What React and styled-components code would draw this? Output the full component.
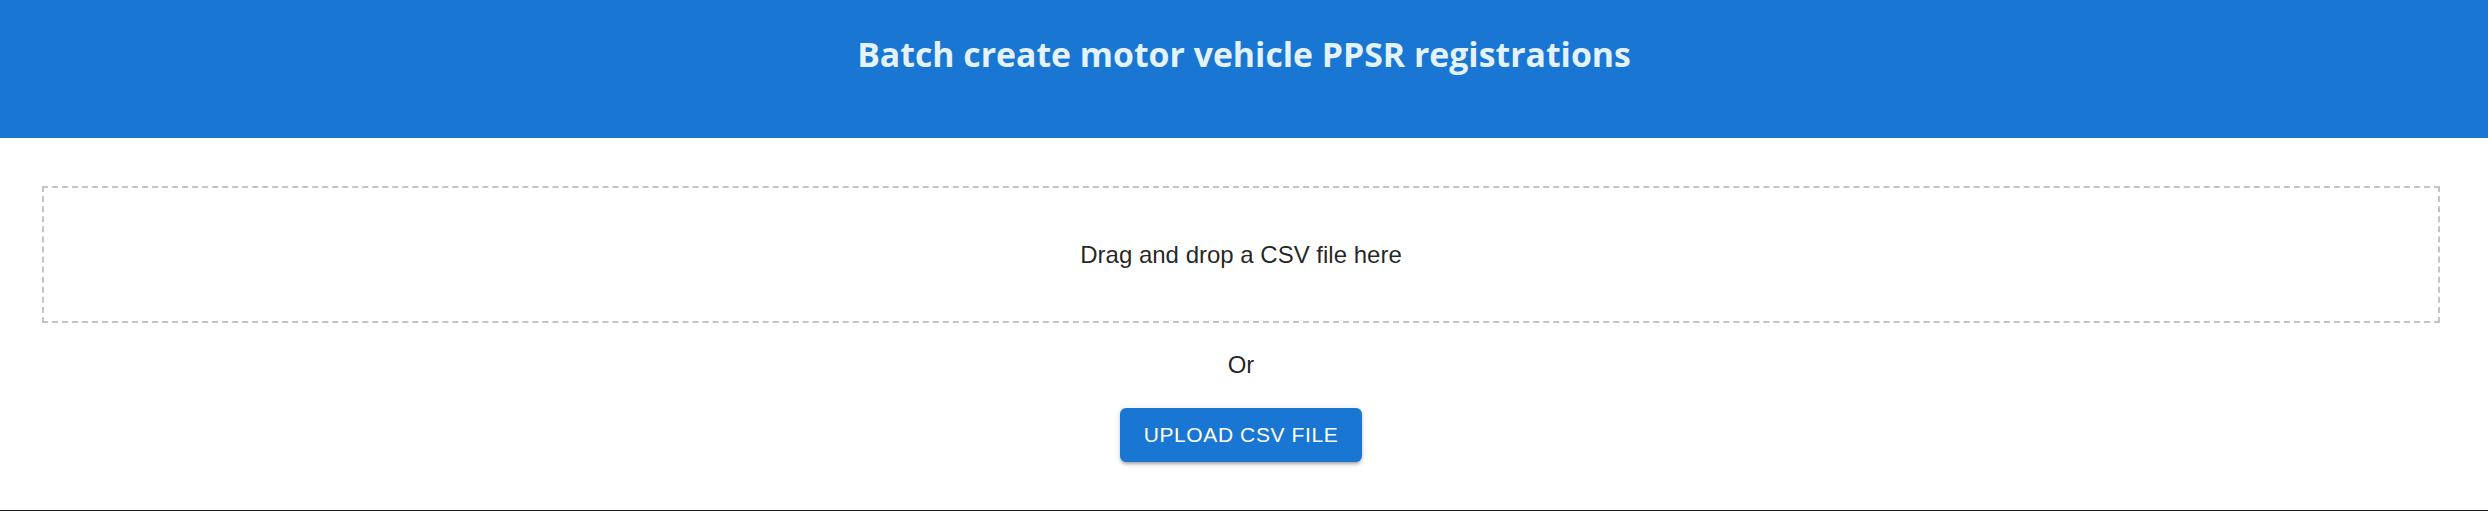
import React from 'react';
import styled, { createGlobalStyle } from 'styled-components';

const GlobalStyle = createGlobalStyle`
  html, body {
    margin: 0;
    padding: 0;
    background: #ffffff;
  }
  * {
    box-sizing: border-box;
  }
`;

const Page = styled.div`
  min-height: 511px;
  display: flex;
  flex-direction: column;
  border-bottom: 1px solid #1c1c1c;
  font-family: "Liberation Sans", Arial, sans-serif;
  color: rgba(0, 0, 0, 0.87);
`;

const Header = styled.header`
  height: 138px;
  padding-top: 34px;
  background: #1976d2;
  display: flex;
  justify-content: center;
  align-items: flex-start;
`;

const Title = styled.h1`
  margin: 0;
  font-family: "Open Sans", "Noto Sans", sans-serif;
  font-weight: 700;
  font-size: 33.8px;
  line-height: 40px;
  color: #e3f2fd;
`;

const Main = styled.main`
  padding: 48px 48px 0 42px;
  display: flex;
  flex-direction: column;
  align-items: center;
`;

const DropZone = styled.div`
  width: 100%;
  height: 137px;
  border: 2px dashed #c4c4c4;
  display: flex;
  align-items: center;
  justify-content: center;
`;

const Text = styled.p`
  margin: ${(p) => p.$top || 0}px 0 0;
  font-size: 24px;
  line-height: 36px;
`;

const UploadButton = styled.button`
  margin-top: 25px;
  padding: 9px 24px;
  border: none;
  border-radius: 6px;
  background: #1976d2;
  color: #ffffff;
  font-family: "Liberation Sans", Arial, sans-serif;
  font-size: 21px;
  line-height: 36px;
  letter-spacing: 0.6px;
  text-transform: uppercase;
  cursor: pointer;
  box-shadow: 0 4px 2px -3px rgba(0, 0, 0, 0.2),
    0 3px 3px 0 rgba(0, 0, 0, 0.14),
    0 1px 7px 0 rgba(0, 0, 0, 0.12);
`;

const App = () => {
  return (
    <Page>
      <GlobalStyle />
      <Header>
        <Title>Batch create motor vehicle PPSR registrations</Title>
      </Header>
      <Main>
        <DropZone>
          <Text>Drag and drop a CSV file here</Text>
        </DropZone>
        <Text $top={24}>Or</Text>
        <UploadButton>Upload CSV file</UploadButton>
      </Main>
    </Page>
  );
};

export default App;
